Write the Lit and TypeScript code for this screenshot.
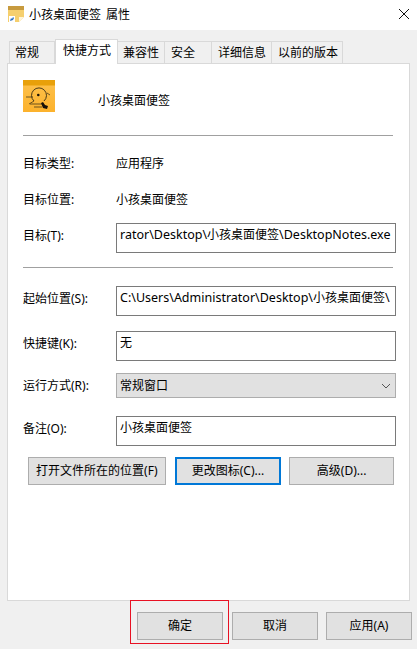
import { LitElement, html, css } from "lit";
import { customElement } from "lit/decorators.js";

@customElement("app-root")
export class AppRoot extends LitElement {
  static styles = css`
    :host {
      display: block;
      width: 417px;
      height: 649px;
      position: relative;
      overflow: hidden;
      background: #f0f0f0;
      color: #000;
      font: 12px/16px "Noto Sans", "Noto Sans CJK SC", sans-serif;
    }
    .title {
      height: 30px;
      box-sizing: border-box;
      background: #fff;
      display: flex;
      align-items: center;
      padding: 0 8px 2px 8px;
      gap: 5px;
    }
    .title .t { flex: 1; white-space: pre; word-spacing: 2px; padding-top: 1px; }
    .tabs {
      display: flex;
      align-items: flex-end;
      height: 25px;
      margin: 9px 0 0 9px;
      position: relative;
      z-index: 1;
    }
    .tab {
      height: 22px;
      box-sizing: border-box;
      border: 1px solid #d9d9d9;
      border-bottom: 0;
      border-left-width: 0;
      margin-bottom: 1px;
      display: flex;
      align-items: center;
      padding: 1px 0 0 6px;
      white-space: nowrap;
    }
    .tab.first { border-left-width: 1px; padding-left: 5px; }
    .tab.on {
      height: 25px;
      margin-bottom: 0;
      background: #fff;
      border-left-width: 1px;
      padding: 0 0 3px 7px;
    }
    .panel {
      margin: -1px 0 0 7px;
      width: 403px;
      height: 538px;
      box-sizing: border-box;
      background: #fff;
      border: 1px solid #d9d9d9;
      padding: 16px 15px 0 15px;
    }
    .head { display: flex; height: 32px; align-items: center; gap: 43px; }
    .head span { padding-top: 10px; }
    .sep { height: 1px; background: #a0a0a0; width: 370px; }
    .row { display: grid; grid-template-columns: 93px 280px; align-items: center; }
    .info { height: 16px; }
    .lab { padding-bottom: 4px; }
    .box {
      height: 30px;
      box-sizing: border-box;
      border: 1px solid #7a7a7a;
      background: #fff;
      padding: 3px 0 0 3px;
      white-space: nowrap;
      overflow: hidden;
    }
    .path { font-size: 12.5px; }
    .path span { font-size: 12px; }
    .select {
      height: 25px;
      box-sizing: border-box;
      border: 1px solid #adadad;
      background: #e1e1e1;
      padding: 0 0 0 3px;
      display: flex;
      align-items: center;
      justify-content: space-between;
    }
    .select svg { margin-right: 4px; }
    .actions { display: flex; margin: 11px 0 0 5px; }
    .btn {
      box-sizing: border-box;
      background: #e1e1e1;
      border: 1px solid #adadad;
      display: flex;
      align-items: center;
      justify-content: center;
      white-space: nowrap;
    }
    .actions .btn { height: 28px; }
    .btn.open { width: 138px; }
    .btn.focus { width: 107px; margin-left: 9px; border: 2px solid #0078d7; }
    .btn.adv { width: 105px; margin-left: 8px; }
    .footer { display: flex; margin: 11px 0 0 137px; gap: 9px; }
    .footer .btn { width: 86px; height: 28px; }
    .footer .btn + .btn + .btn { margin-left: -1px; }
    .mark {
      position: absolute;
      left: 130px;
      top: 600px;
      width: 99px;
      height: 44px;
      box-sizing: border-box;
      border: 1px solid #e81123;
      pointer-events: none;
    }
    .info.m20 { margin-top: 20px; }
    .s14 { margin-top: 14px; }
    .t18 { margin-top: 18px; }
    .t15 { margin-top: 15px; }
    .t12 { margin-top: 12px; }
    .s23 { margin-top: 23px; }
    .w46 { width: 46px; }
    .w63 { width: 63px; }
    .w47 { width: 47px; }
    .w60 { width: 60px; }
    .w71 { width: 71px; }
    .center { justify-content: center; padding-left: 0; }
  `;

  render() {
    return html`
      <div class="title">
        <svg width="16" height="16" viewBox="0 0 16 16">
          <path d="M0 0h16v11l-5 5H0z" fill="#f5cf6e" />
          <rect width="16" height="4" fill="#c79a3e" />
          <path d="M11 16v-5h5z" fill="#fff5d8" />
          <rect x="1" y="10" width="6" height="6" fill="#fff" />
          <path d="M2 15l1-3 1 1 1-2 1 1-1 2z" fill="#2a6fc0" />
        </svg>
        <span class="t">小孩桌面便签 属性</span>
        <svg width="10" height="10" viewBox="0 0 10 10">
          <path d="M0 0l10 10M10 0L0 10" stroke="#111" fill="none" />
        </svg>
      </div>
      <div class="tabs">
        <div class="tab first w46">常规</div>
        <div class="tab on w63">快捷方式</div>
        <div class="tab w47 center">兼容性</div>
        <div class="tab w47">安全</div>
        <div class="tab w60">详细信息</div>
        <div class="tab w71">以前的版本</div>
      </div>
      <div class="panel">
        <div class="head">
          <svg width="32" height="32" viewBox="0 0 32 32">
            <defs>
              <linearGradient id="g" x1="0" y1="0" x2="0" y2="1">
                <stop offset="0" stop-color="#fdc14d" />
                <stop offset="1" stop-color="#fcb22c" />
              </linearGradient>
            </defs>
            <rect width="32" height="32" fill="url(#g)" />
            <rect width="32" height="5.5" fill="#e8a00a" />
            <path d="M11 21A7.5 7.5 0 1 1 21 21" fill="none" stroke="#4a3a18" />
            <circle cx="15.3" cy="15" r="1.3" fill="#1a1408" />
            <path d="M3 17h7M6 24l5-3M7 24h12M11 27h8M24 13l3 2" stroke="#4a3a18" stroke-opacity=".8" fill="none" />
            <path d="M18 23l2-1 2 3 3 1-1 3-4-1z" fill="#15100a" />
          </svg>
          <span>小孩桌面便签</span>
        </div>
        <div class="sep s23"></div>
        <div class="row info m20"><span>目标类型:</span><span>应用程序</span></div>
        <div class="row info m20"><span>目标位置:</span><span>小孩桌面便签</span></div>
        <div class="row t15">
          <span class="lab">目标(T):</span>
          <div class="box path">rator\\Desktop\\<span>小孩桌面便签</span>\\DesktopNotes.exe</div>
        </div>
        <div class="sep s14"></div>
        <div class="row t18">
          <span class="lab">起始位置(S):</span>
          <div class="box path">C:\\Users\\Administrator\\Desktop\\<span>小孩桌面便签</span>\\</div>
        </div>
        <div class="row t15">
          <span class="lab">快捷键(K):</span>
          <div class="box">无</div>
        </div>
        <div class="row t12">
          <span>运行方式(R):</span>
          <div class="select">
            <span>常规窗口</span>
            <svg width="10" height="6" viewBox="0 0 10 6">
              <path d="M1 1l4 4 4-4" stroke="#555" fill="none" />
            </svg>
          </div>
        </div>
        <div class="row t18">
          <span class="lab">备注(O):</span>
          <div class="box">小孩桌面便签</div>
        </div>
        <div class="actions">
          <div class="btn open">打开文件所在的位置(F)</div>
          <div class="btn focus">更改图标(C)...</div>
          <div class="btn adv">高级(D)...</div>
        </div>
      </div>
      <div class="footer">
        <div class="btn">确定</div>
        <div class="btn">取消</div>
        <div class="btn">应用(A)</div>
      </div>
      <div class="mark"></div>
    `;
  }
}
